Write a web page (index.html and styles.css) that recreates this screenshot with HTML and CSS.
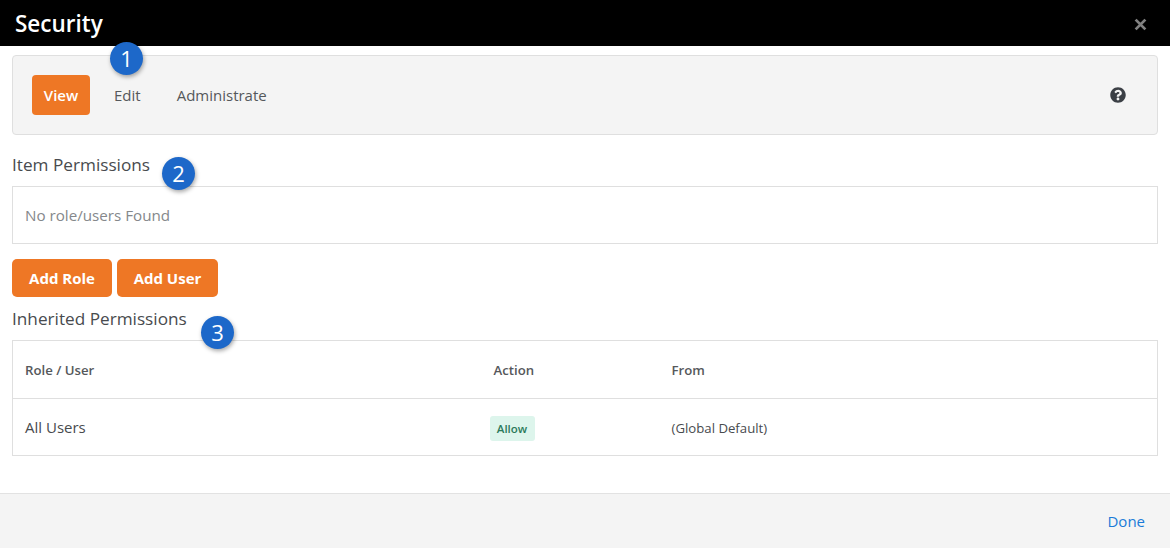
FILE: index.html
```html
<!DOCTYPE html>
<html lang="en">
<head>
<meta charset="utf-8">
<title>Security</title>
<link rel="stylesheet" href="styles.css">
</head>
<body>
<div class="modal">
  <header class="modal-header">
    <h1 class="modal-title">Security</h1>
    <svg class="close-icon" viewBox="0 0 12 12" aria-hidden="true"><path d="M1.500 1.500 L10.500 10.500 M10.500 1.500 L1.500 10.500"/></svg>
  </header>
  <main class="modal-body">
    <nav class="tabs-panel">
      <a class="tab tab-active">View</a>
      <a class="tab">Edit</a>
      <a class="tab">Administrate</a>
      <svg class="help-icon" viewBox="0 0 512 512" aria-hidden="true"><path d="M504 256c0 137-111 248-248 248S8 393 8 256 119 8 256 8s248 111 248 248zM262.700 90c-54.500 0-89.300 23-116.600 63.800-3.500 5.300-2.400 12.400 2.700 16.300l34.700 26.300c5.200 3.900 12.600 3 16.700-2.100 17.900-22.700 30.100-35.800 57.300-35.800 20.400 0 45.700 13.100 45.700 33 0 15-12.400 22.700-32.600 34-23.600 13.200-54.800 29.700-54.800 70.900V302c0 6.600 5.400 12 12 12h56c6.600 0 12-5.400 12-12v-1.300c0-28.600 83.500-29.800 83.500-107.100C379.200 135.300 318.700 90 262.700 90zM256 339c-25.500 0-46.200 20.700-46.200 46.200 0 25.500 20.700 46.200 46.200 46.200s46.200-20.700 46.200-46.200c0-25.500-20.700-46.200-46.200-46.200z"/></svg>
    </nav>
    <h2 class="section-title section-title-first">Item Permissions</h2>
    <div class="empty-box">No role/users Found</div>
    <div class="actions">
      <button class="btn btn-role">Add Role</button>
      <button class="btn btn-user">Add User</button>
    </div>
    <h2 class="section-title section-title-second">Inherited Permissions</h2>
    <table class="perm-table">
      <thead>
        <tr><th class="col-role">Role / User</th><th class="col-action">Action</th><th>From</th></tr>
      </thead>
      <tbody>
        <tr>
          <td class="cell-user">All Users</td>
          <td><span class="allow">Allow</span></td>
          <td class="cell-from">(Global Default)</td>
        </tr>
      </tbody>
    </table>
  </main>
  <footer class="modal-footer"><a class="done">Done</a></footer>
  <span class="marker marker-1">1</span>
  <span class="marker marker-2">2</span>
  <span class="marker marker-3">3</span>
</div>
</body>
</html>
```
FILE: styles.css
```css
* { box-sizing: border-box; }
html, body { margin: 0; padding: 0; }
body {
  width: 1170px;
  height: 548px;
  overflow: hidden;
  background: #fff;
  font-family: "Open Sans", "Liberation Sans", sans-serif;
  color: #484b4e;
}
.modal {
  position: relative;
  display: flex;
  flex-direction: column;
  width: 1170px;
  height: 548px;
}
.modal-header {
  display: flex;
  align-items: center;
  justify-content: space-between;
  height: 46px;
  flex: none;
  padding: 2px 23px 0 15px;
  background: #000;
}
.modal-title {
  margin: 0;
  font-size: 22.500px;
  font-weight: 600;
  line-height: 40px;
  color: #fff;
}
.close-icon {
  width: 13px;
  height: 13px;
  fill: none;
  stroke: #808080;
  stroke-width: 2.600;
}
.modal-body {
  flex: 1;
  padding: 9px 12px 0;
}
.tabs-panel {
  display: flex;
  align-items: center;
  gap: 12px;
  height: 80px;
  padding: 0 31px 0 19px;
  background: #f4f4f4;
  border: 1px solid #dfdfdf;
  border-radius: 4px;
}
.tab {
  padding: 0 12px;
  font-size: 15px;
  line-height: 40px;
  border-radius: 4px;
  color: #55585b;
}
.tab-active {
  width: 58px;
  padding: 0;
  text-align: center;
  background: #ee7725;
  color: #fff;
  font-weight: 600;
}
.help-icon {
  width: 16px;
  height: 16px;
  margin-left: auto;
  fill: #3b3f45;
}
.section-title {
  margin: 0;
  font-size: 17.200px;
  font-weight: 500;
  line-height: 22px;
  color: #484b4e;
}
.section-title-first { margin-top: 19px; }
.section-title-second { margin-top: 11px; }
.empty-box {
  height: 58px;
  margin-top: 10px;
  padding: 0 12px;
  line-height: 57px;
  font-size: 15.200px;
  color: #85888b;
  border: 1px solid #dfdfdf;
}
.actions {
  display: flex;
  gap: 5px;
  margin-top: 15px;
}
.btn {
  height: 38px;
  padding: 0;
  font: 700 15px "Open Sans", "Liberation Sans", sans-serif;
  color: #fff;
  background: #ee7725;
  border: 0;
  border-radius: 5px;
}
.btn-role { width: 100px; }
.btn-user { width: 101px; }
.perm-table {
  width: 100%;
  margin-top: 10px;
  border-collapse: collapse;
  border: 1px solid #dfdfdf;
  table-layout: fixed;
}
.perm-table th {
  height: 58px;
  padding: 1px 12px 0;
  text-align: left;
  font-size: 13.200px;
  font-weight: 600;
  color: #55585b;
  border-bottom: 1px solid #dfdfdf;
}
.perm-table td {
  height: 57px;
  padding: 0 12px;
  vertical-align: middle;
}
.col-role { width: 465px; }
.col-action { width: 182px; padding-left: 16px !important; }
.cell-user { font-size: 15px; }
.cell-from { padding-top: 1px !important; font-size: 13.200px; }
.allow {
  display: inline-block;
  position: relative;
  top: 1px;
  width: 45px;
  text-align: center;
  line-height: 25px;
  font-size: 11.500px;
  font-weight: 600;
  color: #2c7a5b;
  background: #ddf5ec;
  border-radius: 3px;
}
.modal-footer {
  display: flex;
  align-items: center;
  justify-content: flex-end;
  height: 55px;
  flex: none;
  padding: 0 25px;
  background: #f4f4f4;
  border-top: 1px solid #e2e2e2;
}
.done {
  font-size: 15px;
  color: #1a7bd8;
}
.marker {
  position: absolute;
  width: 33px;
  height: 33px;
  border-radius: 50%;
  background: #1d68c9;
  box-shadow: 1px 2px 4px rgba(0, 0, 0, 0.35);
  color: #fff;
  font-size: 22px;
  line-height: 33px;
  text-align: center;
}
.marker-1 { left: 110px; top: 42px; }
.marker-2 { left: 162px; top: 157px; }
.marker-3 { left: 201px; top: 316px; }
```
